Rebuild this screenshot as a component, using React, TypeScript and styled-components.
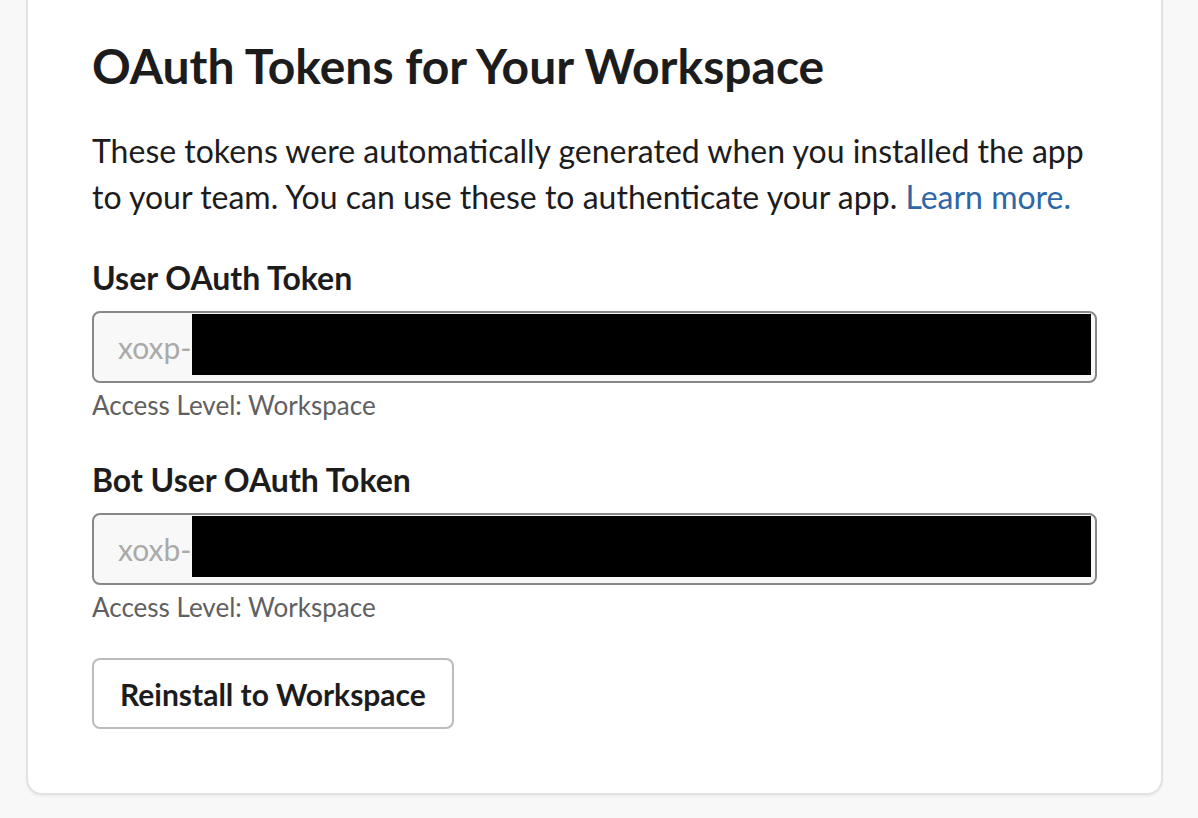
import React from "react";
import styled, { createGlobalStyle } from "styled-components";

const Global = createGlobalStyle`
  html, body {
    margin: 0;
    padding: 0;
    background: #f8f8f8;
    overflow: hidden;
  }
  body {
    font-family: Lato, "Noto Sans", sans-serif;
    color: #1d1c1d;
  }
`;

const Page = styled.div`
  width: 1198px;
  min-height: 818px;
  display: flex;
  flex-direction: column;
  padding: 0 35px 0 26px;
  box-sizing: border-box;
`;

const Card = styled.section`
  margin-top: -30px;
  background: #ffffff;
  border: 2px solid #e2e2e2;
  border-top: none;
  border-radius: 0 0 16px 16px;
  box-shadow: 0 2px 2px rgba(0, 0, 0, 0.04);
  padding: 66px 64px 64px 64px;
  box-sizing: border-box;
  display: flex;
  flex-direction: column;
`;

const Title = styled.h2`
  margin: 0;
  font-size: 48px;
  font-weight: 700;
  line-height: 60px;
  letter-spacing: 0;
`;

const Intro = styled.p`
  margin: 32px 0 0;
  font-size: 32px;
  line-height: 46px;
`;

const Link = styled.a`
  color: #2f66a6;
  text-decoration: none;
`;

const Field = styled.div<{ $first?: boolean }>`
  display: flex;
  flex-direction: column;
  margin-top: ${(p) => (p.$first ? "38px" : "40px")};
`;

const Label = styled.div`
  font-size: 32px;
  font-weight: 700;
  line-height: 40px;
`;

const TokenBox = styled.div`
  margin-top: 13px;
  height: 72px;
  display: flex;
  align-items: stretch;
  border: 2px solid #888888;
  border-radius: 8px;
  background: #f8f8f8;
  padding: 1px 4px 6px 24px;
  box-sizing: border-box;
`;

const Prefix = styled.span`
  display: flex;
  align-items: center;
  padding-top: 5px;
  font-size: 30px;
  color: #aaaaaa;
`;

const Redacted = styled.span`
  flex: 1;
  background: #000000;
`;

const Hint = styled.div`
  margin-top: 7px;
  font-size: 26px;
  line-height: 30px;
  color: #616061;
`;

const Button = styled.button`
  align-self: flex-start;
  margin-top: 36px;
  height: 71px;
  padding: 0 26px;
  background: #ffffff;
  border: 2px solid #bbbbbb;
  border-radius: 8px;
  font-family: Lato, "Noto Sans", sans-serif;
  font-size: 30px;
  font-weight: 700;
  color: #1d1c1d;
  cursor: pointer;
`;

const tokens = [
  { label: "User OAuth Token", prefix: "xoxp-" },
  { label: "Bot User OAuth Token", prefix: "xoxb-" },
];

export default function App() {
  return (
    <>
      <Global />
      <Page>
        <Card>
          <Title>OAuth Tokens for Your Workspace</Title>
          <Intro>
            These tokens were automatically generated when you installed the app
            to your team. You can use these to authenticate your app.{" "}
            <Link href="#">Learn more.</Link>
          </Intro>
          {tokens.map((t, i) => (
            <Field key={t.label} $first={i === 0}>
              <Label>{t.label}</Label>
              <TokenBox>
                <Prefix>{t.prefix}</Prefix>
                <Redacted />
              </TokenBox>
              <Hint>Access Level: Workspace</Hint>
            </Field>
          ))}
          <Button>Reinstall to Workspace</Button>
        </Card>
      </Page>
    </>
  );
}
